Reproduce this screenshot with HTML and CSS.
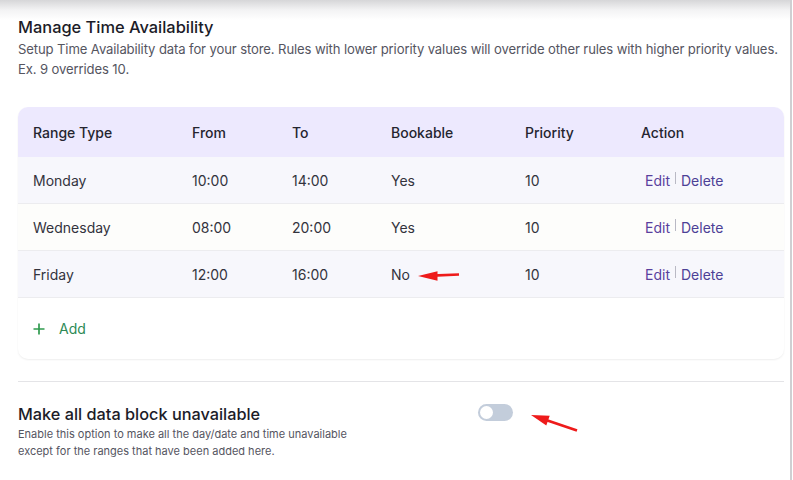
FILE: index.html
```html
<!DOCTYPE html>
<html lang="en">
<head>
<meta charset="utf-8">
<title>Manage Time Availability</title>
<link rel="stylesheet" href="styles.css">
</head>
<body>
<div class="page">
  <section class="intro">
    <h2 class="title">Manage Time Availability</h2>
    <p class="desc">Setup Time Availability data for your store. Rules with lower priority values will override other rules with higher priority values. Ex. 9 overrides 10.</p>
  </section>

  <div class="card">
    <table class="rules">
      <colgroup>
        <col class="c1"><col class="c2"><col class="c3"><col class="c4"><col class="c5"><col class="c6">
      </colgroup>
      <thead>
        <tr><th>Range Type</th><th>From</th><th>To</th><th>Bookable</th><th>Priority</th><th>Action</th></tr>
      </thead>
      <tbody>
        <tr class="odd"><td>Monday</td><td>10:00</td><td>14:00</td><td>Yes</td><td>10</td><td class="act"><a class="edit">Edit</a><span class="sep"></span><a class="del">Delete</a></td></tr>
        <tr class="even"><td>Wednesday</td><td>08:00</td><td>20:00</td><td>Yes</td><td>10</td><td class="act"><a class="edit">Edit</a><span class="sep"></span><a class="del">Delete</a></td></tr>
        <tr class="odd"><td>Friday</td><td>12:00</td><td>16:00</td><td>No</td><td>10</td><td class="act"><a class="edit">Edit</a><span class="sep"></span><a class="del">Delete</a></td></tr>
      </tbody>
    </table>
    <div class="addrow">
      <svg class="plus" width="12" height="12" viewBox="0 0 12 12"><path d="M6 0.5V11.5M0.5 6H11.5" stroke="#2f9a4e" stroke-width="1.7" fill="none"/></svg>
      <span class="addtxt">Add</span>
    </div>
  </div>

  <hr class="divider">

  <section class="option">
    <div class="opttext">
      <h3 class="opttitle">Make all data block unavailable</h3>
      <p class="optdesc">Enable this option to make all the day/date and time unavailable<br>except for the ranges that have been added here.</p>
    </div>
    <span class="toggle"><span class="knob"></span></span>
  </section>

  <svg class="arrows" width="793" height="480" viewBox="0 0 793 480">
    <line x1="459" y1="274.5" x2="432" y2="275.6" stroke="#ee1b1b" stroke-width="2.6"/>
    <polygon points="418,276 437.5,271.3 437.5,280.7" fill="#ee1b1b"/>
    <line x1="577" y1="430.5" x2="546" y2="420" stroke="#ee1b1b" stroke-width="2.8"/>
    <polygon points="531,415 546.3,425.6 549.7,415.8" fill="#ee1b1b"/>
  </svg>
</div>
</body>
</html>
```

FILE: styles.css
```css
html, body {
  margin: 0;
  padding: 0;
  background: #ffffff;
}
body {
  font-family: Inter, "Noto Sans", "Liberation Sans", sans-serif;
  color: #2a2a35;
}
.page {
  position: relative;
  box-sizing: border-box;
  width: 792px;
  height: 480px;
  padding: 16px 6px 0 18px;
  border-right: 2px solid #cfcfd2;
  background: linear-gradient(#d6d6d8 0px, #f3f3f4 10px, #ffffff 20px) no-repeat;
  overflow: hidden;
}
.title {
  margin: 0;
  font-size: 16.4px;
  font-weight: 500;
  line-height: 22px;
  color: #1c1c28;
}
.desc {
  margin: 1px 0 0;
  font-size: 13.1px;
  letter-spacing: -0.12px;
  line-height: 20px;
  color: #55555f;
}
.card {
  margin-top: 28px;
  border-radius: 10px;
  background: #ffffff;
  box-shadow: 0 1px 2px rgba(0, 0, 0, 0.07);
  overflow: hidden;
}
.rules {
  width: 100%;
  border-collapse: collapse;
  table-layout: fixed;
}
.c1 { width: 159px; }
.c2 { width: 100px; }
.c3 { width: 99px; }
.c4 { width: 134px; }
.c5 { width: 116px; }
.rules th {
  height: 50px;
  padding: 0 0 0 15px;
  text-align: left;
  font-size: 14px;
  font-weight: 500;
  color: #25252f;
  background: #ede9fe;
}
.rules td {
  height: 46px;
  padding: 0 0 0 15px;
  font-size: 14px;
  color: #33333d;
  border-bottom: 1px solid #ececef;
}
.odd td { background: #f7f7fc; }
.even td { background: #fdfdfb; }
.rules td.act { padding-left: 19px; }
.edit {
  color: #5a3f9e;
}
.del {
  color: #4c4196;
}
.sep {
  display: inline-block;
  width: 1px;
  height: 12px;
  margin: 0 5px 0 5px;
  background: #b9b9c4;
  vertical-align: text-top;
}
.addrow {
  display: flex;
  align-items: center;
  height: 61px;
  padding-left: 15px;
  gap: 14px;
}
.addtxt {
  font-size: 14px;
  color: #2e8a55;
}
.divider {
  margin: 22px 0 0;
  border: 0;
  border-top: 1px solid #e4e4e7;
}
.option {
  display: flex;
  align-items: flex-start;
  padding-top: 21px;
}
.opttext {
  width: 460px;
}
.opttitle {
  margin: 0;
  font-size: 16.3px;
  font-weight: 500;
  line-height: 22px;
  color: #1c1c28;
}
.optdesc {
  margin: 1px 0 0;
  font-size: 11px;
  line-height: 17px;
  color: #55555f;
}
.toggle {
  display: flex;
  align-items: center;
  box-sizing: border-box;
  width: 35px;
  height: 17px;
  margin-top: 1px;
  padding: 0 2px;
  border-radius: 9px;
  background: #c3cddb;
}
.knob {
  width: 13px;
  height: 13px;
  border-radius: 50%;
  background: #ffffff;
}
.arrows {
  position: absolute;
  top: 0;
  left: 0;
  pointer-events: none;
}
```
